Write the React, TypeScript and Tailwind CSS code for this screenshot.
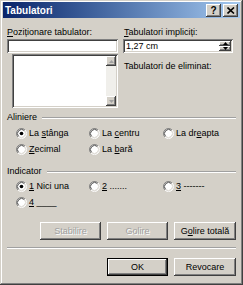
import React from "react";

const sunken =
  "shadow-[inset_1px_1px_#808080,inset_-1px_-1px_#ffffff,inset_2px_2px_#404040,inset_-2px_-2px_#d4d0c8]";
const raised =
  "shadow-[inset_-1px_-1px_#404040,inset_1px_1px_#ffffff,inset_-2px_-2px_#808080,inset_2px_2px_#d4d0c8]";

function Radio({ checked }: { checked?: boolean }) {
  return (
    <svg width="11" height="11" viewBox="0 0 12 12" className="shrink-0">
      <circle cx="6" cy="6" r="5" fill="#ffffff" />
      <path d="M2.11 9.89 A5.5 5.5 0 0 1 9.89 2.11" stroke="#808080" fill="none" />
      <path d="M9.89 2.11 A5.5 5.5 0 0 1 2.11 9.89" stroke="#ffffff" fill="none" />
      <path d="M2.82 9.18 A4.5 4.5 0 0 1 9.18 2.82" stroke="#404040" fill="none" />
      <path d="M9.18 2.82 A4.5 4.5 0 0 1 2.82 9.18" stroke="#d4d0c8" fill="none" />
      {checked && <circle cx="6" cy="6" r="2" fill="#000000" />}
    </svg>
  );
}

function RadioItem({ checked, children }: { checked?: boolean; children: React.ReactNode }) {
  return (
    <div className="flex items-center h-[13px]">
      <Radio checked={checked} />
      <span className="ml-[2px] leading-[13px] whitespace-nowrap">{children}</span>
    </div>
  );
}

function GroupHeader({ label }: { label: string }) {
  return (
    <div className="flex items-center h-[13px]">
      <span className="leading-[13px]">{label}</span>
      <div className="flex-1 ml-[5px] mr-[1px] h-[2px] border-t border-t-[#a0a0a0] border-b border-b-white" />
    </div>
  );
}

function Btn({
  children,
  disabled,
  def,
  w,
}: {
  children: React.ReactNode;
  disabled?: boolean;
  def?: boolean;
  w: string;
}) {
  return (
    <div
      className={`${w} h-[18px] flex items-center justify-center bg-[#d4d0c8] ${
        def
          ? "border border-black shadow-[inset_-1px_-1px_#404040,inset_1px_1px_#ffffff,inset_-2px_-2px_#808080]"
          : raised
      }`}
    >
      <span
        className={`leading-[13px] whitespace-nowrap ${
          disabled ? "text-[#a0a0a0] [text-shadow:1px_1px_0_#ffffff]" : "text-black"
        }`}
      >
        {children}
      </span>
    </div>
  );
}

function Arrow({ dir, color = "#000" }: { dir: "up" | "down"; color?: string }) {
  return (
    <svg width="5" height="3" viewBox="0 0 5 3">
      {dir === "up" ? (
        <path d="M2.5 0 L5 3 L0 3 Z" fill={color} />
      ) : (
        <path d="M0 0 L5 0 L2.5 3 Z" fill={color} />
      )}
    </svg>
  );
}

export default function App() {
  return (
    <div
      className="w-[243px] h-[285px] bg-[#d4d0c8] text-[9px] text-black flex flex-col shadow-[inset_-1px_-1px_#404040,inset_1px_1px_#d4d0c8,inset_-2px_-2px_#808080,inset_2px_2px_#ffffff] overflow-hidden"
      style={{ fontFamily: '"Liberation Sans", Arial, sans-serif' }}
    >
      {/* Title bar */}
      <div className="mx-[3px] mt-[2px] h-[16px] flex items-center bg-gradient-to-r from-[#0a246a] to-[#a6caf0] pl-[2px] pr-[2px]">
        <span className="text-white font-bold text-[10px] leading-[13px] flex-1">Tabulatori</span>
        <div className={`w-[15px] h-[13px] ${raised} bg-[#d4d0c8] flex items-center justify-center`}>
          <span className="font-bold text-[10px] leading-[10px] mt-[1px]">?</span>
        </div>
        <div className={`ml-[2px] w-[15px] h-[13px] ${raised} bg-[#d4d0c8] flex items-center justify-center`}>
          <svg width="8" height="7" viewBox="0 0 8 7">
            <path d="M0.5 0.5 L7 6.5 M7 0.5 L0.5 6.5" stroke="#000" strokeWidth="1.6" />
          </svg>
        </div>
      </div>

      {/* Top section */}
      <div className="flex pl-[7px] pt-[8px]">
        <div className="w-[111px] flex flex-col">
          <div className="h-[13px] leading-[13px] whitespace-nowrap">
            <span className="underline">P</span>oziționare tabulator:
          </div>
          <div className={`h-[14px] bg-white ${sunken}`} />
          <div className={`ml-[5px] mt-[1px] h-[54px] bg-white ${sunken} flex justify-end p-[2px]`}>
            <div className="w-[10px] h-full flex flex-col bg-[#f0efeb]">
              <div className={`h-[10px] bg-[#d4d0c8] ${raised} flex items-center justify-center`}>
                <Arrow dir="up" color="#a0a0a0" />
              </div>
              <div className="flex-1" />
              <div className={`h-[10px] bg-[#d4d0c8] ${raised} flex items-center justify-center`}>
                <Arrow dir="down" color="#a0a0a0" />
              </div>
            </div>
          </div>
        </div>
        <div className="ml-[5px] w-[110px] flex flex-col">
          <div className="h-[13px] leading-[13px] pl-[1px] whitespace-nowrap">
            <span className="underline">T</span>abulatori impliciți:
          </div>
          <div className={`h-[14px] bg-white ${sunken} flex items-center pl-[3px] pr-[2px]`}>
            <span className="flex-1 leading-[10px]">1,27 cm</span>
            <div className="w-[12px] h-[10px] flex flex-col">
              <div className={`h-[5px] bg-[#d4d0c8] ${raised} flex items-center justify-center`}>
                <Arrow dir="up" />
              </div>
              <div className={`h-[5px] bg-[#d4d0c8] ${raised} flex items-center justify-center`}>
                <Arrow dir="down" />
              </div>
            </div>
          </div>
          <div className="mt-[7px] h-[13px] leading-[13px] pl-[1px] whitespace-nowrap">
            Tabulatori de eliminat:
          </div>
        </div>
      </div>

      {/* Aliniere */}
      <div className="pl-[7px] pr-[6px] mt-[3px]">
        <GroupHeader label="Aliniere" />
        <div className="mt-[3px] pl-[9px] grid grid-cols-[73px_74px_auto] gap-y-[3px]">
          <RadioItem checked>
            La <span className="underline">s</span>tânga
          </RadioItem>
          <RadioItem>
            La <span className="underline">c</span>entru
          </RadioItem>
          <RadioItem>
            La dr<span className="underline">e</span>apta
          </RadioItem>
          <RadioItem>
            <span className="underline">Z</span>ecimal
          </RadioItem>
          <RadioItem>
            La <span className="underline">b</span>ară
          </RadioItem>
        </div>
      </div>

      {/* Indicator */}
      <div className="pl-[7px] pr-[6px] mt-[9px]">
        <GroupHeader label="Indicator" />
        <div className="mt-[2px] pl-[9px] grid grid-cols-[73px_74px_auto] gap-y-[3px]">
          <RadioItem checked>
            <span className="underline">1</span> Nici una
          </RadioItem>
          <RadioItem>
            <span className="underline">2</span> .......
          </RadioItem>
          <RadioItem>
            <span className="underline">3</span> -------
          </RadioItem>
          <RadioItem>
            <span className="underline">4</span> ____
          </RadioItem>
        </div>
      </div>

      {/* Buttons row */}
      <div className="mt-[13px] flex justify-end pr-[7px] gap-[6px]">
        <Btn w="w-[61px]" disabled>
          Stabilire
        </Btn>
        <Btn w="w-[61px]" disabled>
          Golire
        </Btn>
        <Btn w="w-[62px]">
          G<span className="underline">o</span>lire totală
        </Btn>
      </div>

      {/* Separator */}
      <div className="mt-[7px] mx-[7px] h-[2px] border-t border-t-[#a0a0a0] border-b border-b-white" />

      {/* OK / Revocare */}
      <div className="mt-[9px] flex justify-end pr-[7px] gap-[6px]">
        <Btn w="w-[61px]" def>
          OK
        </Btn>
        <Btn w="w-[62px]">Revocare</Btn>
      </div>
    </div>
  );
}
